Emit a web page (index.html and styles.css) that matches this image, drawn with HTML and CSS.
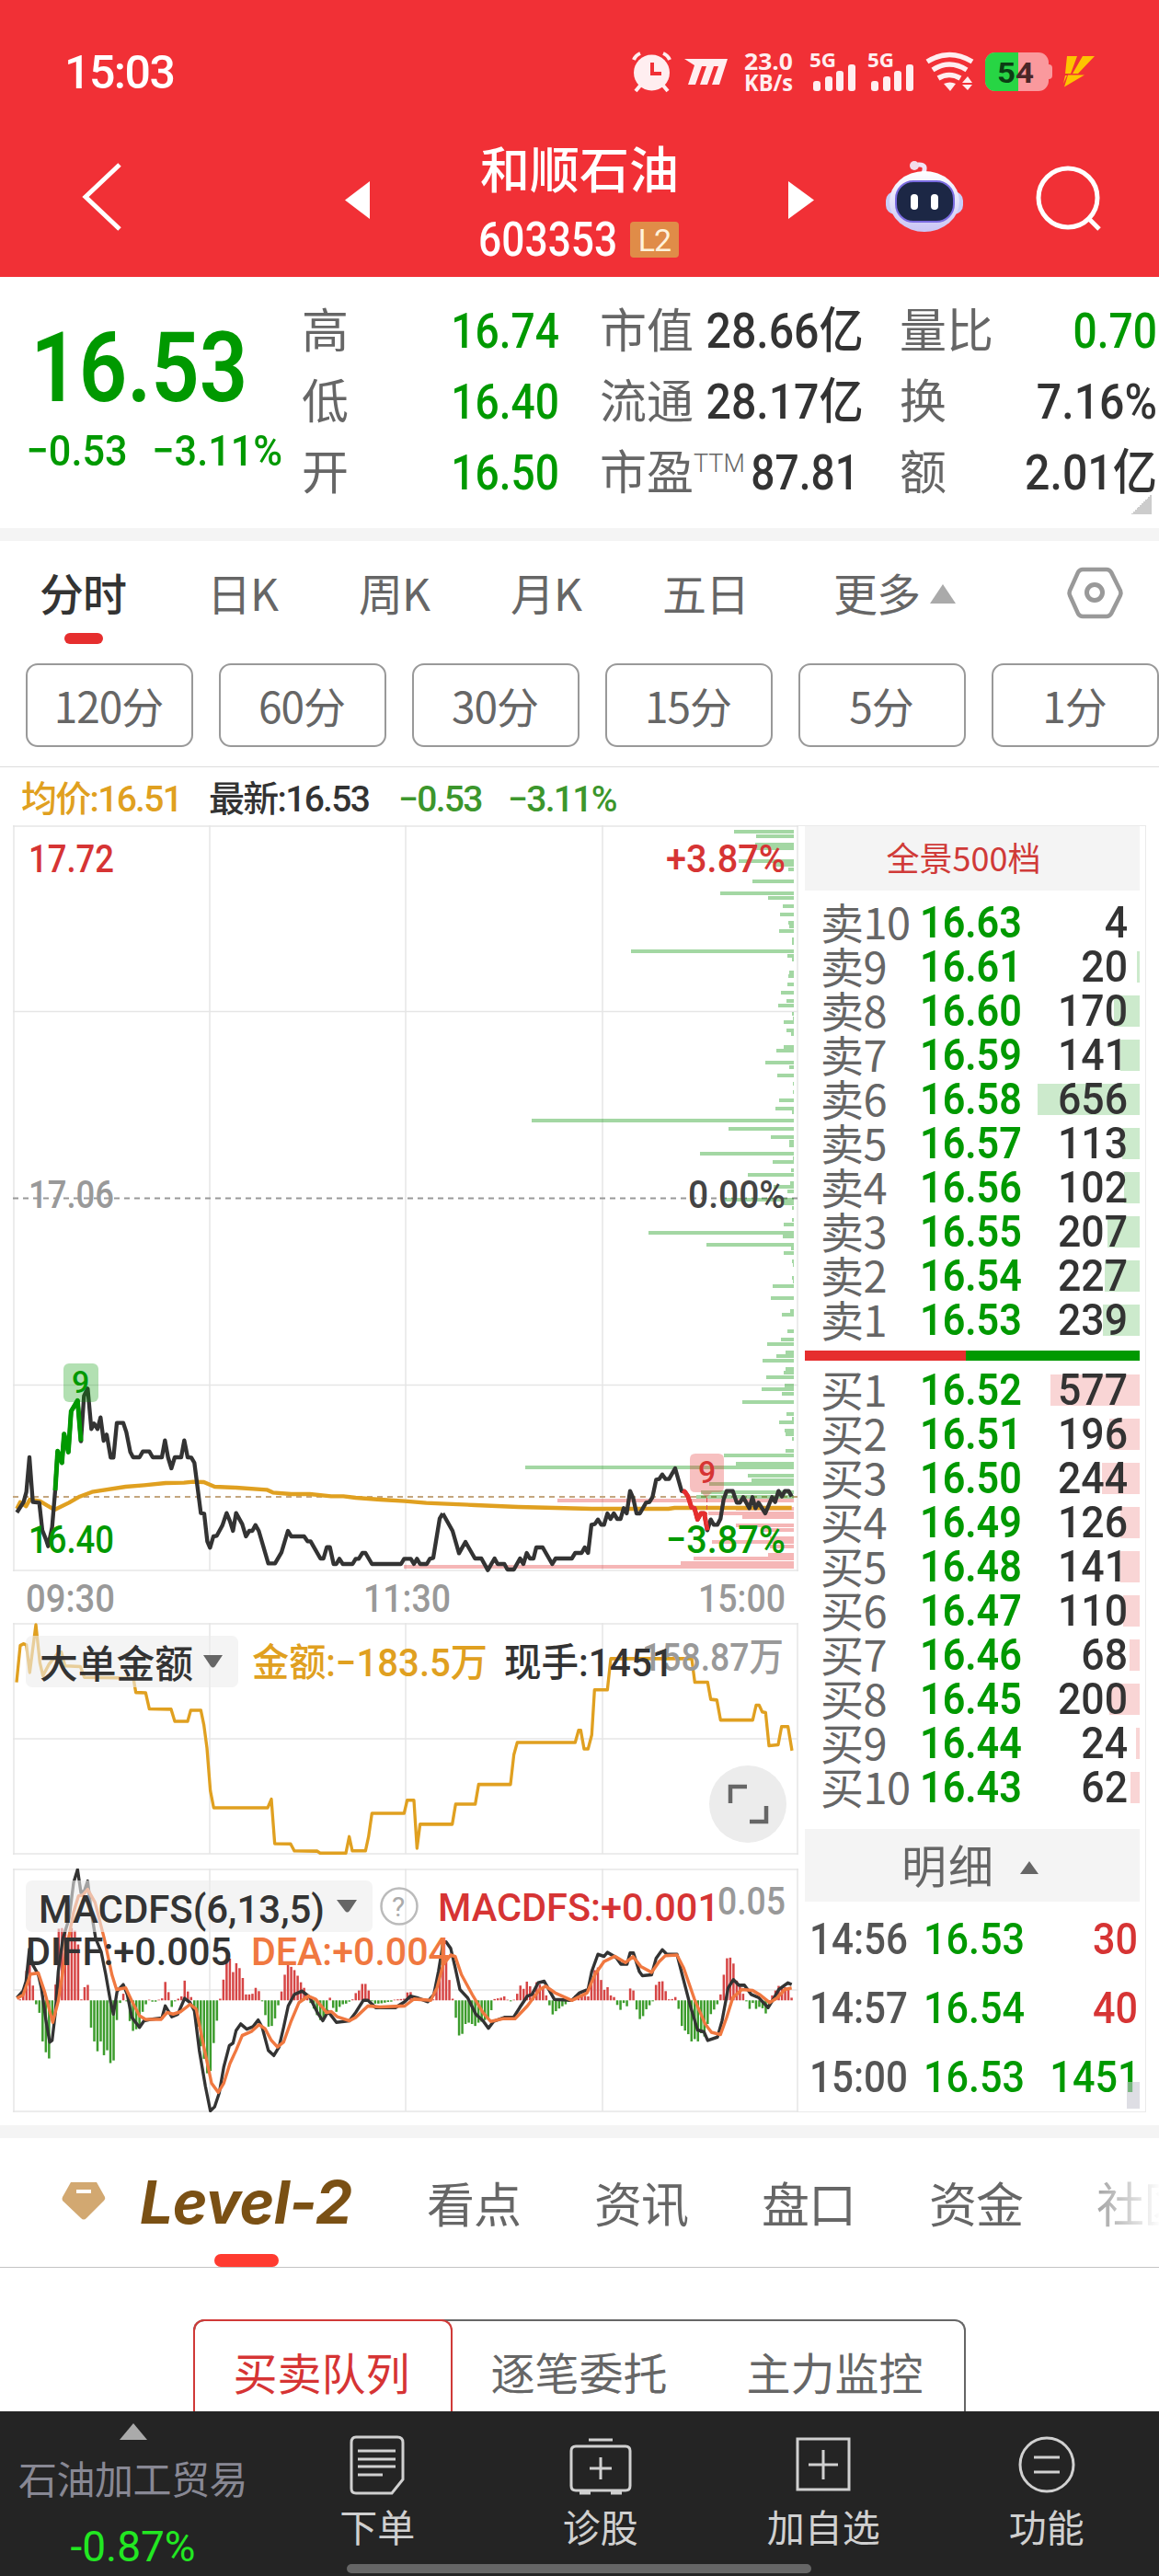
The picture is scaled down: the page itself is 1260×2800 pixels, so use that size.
FILE: index.html
```
<!DOCTYPE html>
<html lang="zh-CN">
<head>
<meta charset="UTF-8">
<title>和顺石油 603353</title>
<link rel="stylesheet" href="styles.css">
</head>
<body>
<header class="top">
  <div class="status">
    <span class="clock">15:03</span>
    <svg class="tray" viewBox="680 50 520 60" width="520" height="60">
      <!-- alarm -->
      <circle cx="708.500" cy="79" r="19.500" fill="#ffeef0"/>
      <path d="M689 65q2-5 7-7M728 65q-2-5-7-7M696 93l-5 6M721 93l5 6" stroke="#ffeef0" stroke-width="4" fill="none"/>
      <path d="M709 68v12h10" stroke="#f13036" stroke-width="4" fill="none"/>
      <path d="M744 64h47l-9 28h-8l7-20h-5l-7 20h-8l7-20h-5l-7 20h-8l7-21z" fill="#ffeef0"/>
      <g class="tiny">
        <text x="809" y="76" textLength="53" lengthAdjust="spacingAndGlyphs">23.0</text>
        <text x="809" y="99" textLength="53" lengthAdjust="spacingAndGlyphs">KB/s</text>
        <text x="880" y="73" textLength="29" lengthAdjust="spacingAndGlyphs" class="g5">5G</text>
        <text x="943" y="73" textLength="29" lengthAdjust="spacingAndGlyphs" class="g5">5G</text>
      </g>
      <g fill="#ffeef0">
        <rect x="884" y="88" width="8" height="11" rx="3"/><rect x="897" y="83" width="8" height="16" rx="3"/><rect x="909" y="77" width="8" height="22" rx="3"/><rect x="922" y="70" width="8" height="29" rx="3"/>
        <rect x="947" y="88" width="8" height="11" rx="3"/><rect x="960" y="83" width="8" height="16" rx="3"/><rect x="972" y="77" width="8" height="22" rx="3"/><rect x="985" y="70" width="8" height="29" rx="3"/>
        <path d="M1033 99l-7-8q7-3 13 0zM1052 83l5 7h-11zM1052 98l5-6h-11z"/>
      </g>
      <path d="M1008 67q24-15 49 0M1014 76q18-12 37 0M1020 85q12-7 24 0" fill="none" stroke="#ffeef0" stroke-width="5.500"/>
      <rect x="1071" y="57" width="69" height="42" rx="11" fill="#fa999d"/>
      <path d="M1082 57h25v42h-25a11 11 0 0 1-11-11v-20a11 11 0 0 1 11-11z" fill="#27d544"/>
      <path d="M1140 70q4 0 4 4v8q0 4-4 4z" fill="#fa999d"/>
      <text x="1084" y="90" class="pct" textLength="40" lengthAdjust="spacingAndGlyphs"><tspan fill="#0c3d14">5</tspan><tspan fill="#4a2628">4</tspan></text>
      <path d="M1160 61h11l-7 19h-6zM1177 61h13l-18 19h-6zM1161 81.500h18l-22 13zM1158 82h2l-4 9z" fill="#fdc400"/>
    </svg>
  </div>
  <div class="nav">
    <svg viewBox="0 130 360 171" width="360" height="171"><path d="M130 179L93 214l37 35" fill="none" stroke="#fff" stroke-width="5"/></svg>
    <svg viewBox="360 130 60 171" width="60" height="171"><path d="M402 197v41l-27-20.500z" fill="#fff"/></svg>
    <div class="stock">
      <div class="name">和顺石油</div>
      <div class="code"><span>603353</span><i>L2</i></div>
    </div>
    <svg viewBox="840 130 60 171" width="60" height="171"><path d="M857 197v41l28-20.500z" fill="#fff"/></svg>
    <svg viewBox="900 130 200 171" width="200" height="171">
      <defs>
        <linearGradient id="shell" x1="0" y1="0" x2="0" y2="1"><stop offset="0" stop-color="#fff"/><stop offset="1" stop-color="#c9c4f5"/></linearGradient>
      </defs>
      <path d="M1004 188q4-10-6-9" fill="none" stroke="#f0e4f6" stroke-width="5"/><circle cx="994" cy="180" r="5" fill="#f3dcea"/>
      <rect x="963" y="208" width="84" height="25" rx="10" fill="#c9cdf8"/>
      <ellipse cx="1005" cy="219" rx="38" ry="33" fill="url(#shell)"/>
      <rect x="974" y="197" width="63" height="44" rx="19" fill="#1c2745" stroke="#7a6be0" stroke-width="2"/>
      <rect x="990" y="211" width="8" height="17" rx="4" fill="#fff"/><rect x="1012" y="211" width="8" height="17" rx="4" fill="#fff"/>
    </svg>
    <svg viewBox="1100 130 160 171" width="160" height="171"><g fill="none" stroke="#fff" stroke-width="5"><circle cx="1161" cy="215" r="32"/><path d="M1183 237l12 12"/></g></svg>
  </div>
</header>

<section class="quote">
  <div class="last">
    <div class="price">16.53</div>
    <div class="chg"><span>−0.53</span><span>−3.11%</span></div>
  </div>
  <div class="facts">
    <span>高</span><b class="down">16.74</b><span>市值</span><b>28.66亿</b><span>量比</span><b class="down">0.70</b>
    <span>低</span><b class="down">16.40</b><span>流通</span><b>28.17亿</b><span>换</span><b>7.16%</b>
    <span>开</span><b class="down">16.50</b><span>市盈<sup>TTM</sup></span><b class="pe">87.81</b><span>额</span><b>2.01亿</b>
  </div>
  <i class="corner"></i>
</section>

<nav class="periods">
  <a class="on">分时</a><a>日K</a><a>周K</a><a>月K</a><a>五日</a><a class="more">更多</a>
  <svg viewBox="1158 613 64 64" width="64" height="64"><path d="M1177 619h26q3 0 5 3l10 20q1 3 0 5l-10 20q-2 3-5 3h-26q-3 0-5-3l-9-20q-1-2 0-5l9-20q2-3 5-3z" fill="none" stroke="#999" stroke-width="4.500"/><circle cx="1190" cy="644" r="8.500" fill="none" stroke="#999" stroke-width="5"/></svg>
</nav>
<div class="minutes"><a>120分</a><a>60分</a><a>30分</a><a>15分</a><a>5分</a><a>1分</a></div>

<div class="legend"><span class="avg">均价:16.51</span><span class="now">最新:16.53</span><span class="g">−0.53</span><span class="g">−3.11%</span></div>

<main class="board">
  <div class="charts">
    <svg viewBox="0 897 868 867" width="868" height="867" class="chart">
      <path d="M14 898H868M14 1707H868M15 897V1708M867 897V1708M228 897V1707M441 897V1707M655 897V1707M14 1099.500H868M14 1505.500H868" class="grid"/>
      <path d="M14 1302.500H868" stroke="#999" stroke-width="2" stroke-dasharray="6 5"/>
      <path d="M14 1627H868" stroke="#c4a67e" stroke-width="2" stroke-dasharray="6 5"/>
      <g id="depth"></g>
      <g transform="translate(0 1440) scale(.33333)" class="line">
        <path class="avgline" d="M55 600L66 578 85 592 97 570 130 575 155 590 178 603 225 580 260 560 300 545 410 528 470 523 540 516 600 515 630 512 665 513 700 528 770 531 870 538 890 547 950 552 1010 552 1080 559 1120 559 1160 564 1240 570 1320 575 1390 581 1440 583 1550 588 1690 594 1810 597 1930 600 2180 600 2200 597 2582 597"/>
        <path class="dark" d="M55 612L77 578 86 545 96 432 107 578 128 580 138 670 150 700 157 722 170 660 180 540 188 412 202 450 209 356 223 415 232 282 253 247 264 380 274 232 286 208 298 340 307 322 318 340 328 302 338 378 348 358 361 433 370 433 381 320 402 320 412 350 425 415 434 432 455 432 466 413 487 413 498 432 528 432 538 377 548 432 559 468 570 432 591 432 601 377 612 432 624 433 634 450 655 614 666 616 676 706 685 727 696 690 707 688 725 655 739 614 750 640 760 672 770 614 790 650 802 690 813 672 823 672 833 653 844 672 875 778 897 778 918 742 939 672 950 690 992 690 1003 706 1013 706 1045 762 1055 762 1066 725 1076 725 1088 780 1097 780 1107 763 1118 780 1150 780 1160 763 1170 763 1182 744 1192 744 1213 780 1308 780 1318 763 1340 763 1350 780 1360 763 1370 780 1392 780 1402 763 1413 760 1434 632 1444 615"/>
        <path class="up9" d="M180 540L188 412 202 450 209 356 223 415 232 282 253 247 264 380"/>
      </g>
      <g transform="translate(480 1340) scale(.33333)" class="line">
        <path class="dark" d="M4 915L36 972 57 1045 78 1008 109 1062 130 1062 151 1100 173 1062 183 1080 205 1080 215 1098 236 1098 256 1062 267 1080 278 1044 288 1062 300 1062 309 1026 330 1026 361 1080 372 1062 425 1062 436 1044 457 1044 467 1026 478 1044 489 952 500 950 510 935 521 952 530 952 541 915 551 933 562 915 573 933 584 933 594 898 604 915 615 842 625 865 636 915 647 915 667 880 678 878 688 862 700 805 710 803 720 788 731 803 742 803 762 768 783 842 794 845 804 860 815 895 825 898 835 935 846 915 857 915 867 970 878 935 888 952 900 952 910 932 920 870 930 842 950 842 963 880 973 880 984 862 994 880 1004 898 1014 862 1024 898 1034 880 1056 915 1078 862 1088 878 1099 842 1110 860 1120 842 1132 842 1142 860"/>
        <path class="dn9" d="M787 840L794 845 804 860 815 895 825 898 835 935 846 915 857 915 867 970"/>
      </g>
      <rect x="69" y="1482" width="38" height="42" rx="6" fill="#009900" fill-opacity=".3"/>
      <path d="M756 1580h25q6 0 6 6v30q0 6-6 6h-7l-6 6-6-6h-6q-6 0-6-6v-30q0-6 6-6z" fill="#e62e2e" fill-opacity=".3"/>
      <path d="M768.500 1628v30" stroke="#e05050" stroke-dasharray="5 3"/>
      <g class="n9"><text x="78" y="1514" fill="#090">9</text><text x="759" y="1612" fill="#d63434">9</text></g>
      <g class="t42">
        <text x="31" y="948" textLength="93" lengthAdjust="spacingAndGlyphs" fill="#d63434">17.72</text>
        <text x="724" y="948" textLength="130" lengthAdjust="spacingAndGlyphs" fill="#d63434">+3.87%</text>
        <text x="31" y="1313" textLength="93" lengthAdjust="spacingAndGlyphs" fill="#999">17.06</text>
        <text x="748" y="1313" textLength="106" lengthAdjust="spacingAndGlyphs" fill="#444">0.00%</text>
        <text x="31" y="1688" textLength="93" lengthAdjust="spacingAndGlyphs" fill="#090">16.40</text>
        <text x="724" y="1688" textLength="130" lengthAdjust="spacingAndGlyphs" fill="#090">−3.87%</text>
        <g fill="#999">
          <text x="28" y="1752" textLength="97" lengthAdjust="spacingAndGlyphs">09:30</text>
          <text x="395" y="1752" textLength="95" lengthAdjust="spacingAndGlyphs">11:30</text>
          <text x="759" y="1752" textLength="95" lengthAdjust="spacingAndGlyphs">15:00</text>
        </g>
      </g>
    </svg>

    <svg viewBox="0 1764 868 267" width="868" height="267" class="chart">
      <path d="M14 1765H868M14 2015H868M15 1764V2016M867 1764V2016M228 1764V2015M441 1764V2015M655 1764V2015M14 1890H868" class="grid"/>
      <g transform="translate(0 1750) scale(.33333 .35714)" class="line thin">
        <path class="avgline" d="M54 220L66 108 76 103 86 106 97 190 117 45 130 160 140 200 160 165 190 130 200 128 212 170 262 172 275 205 435 207 443 251 475 252 487 301 558 302 570 339 612 339 622 305 655 305 665 350 675 420 686 550 697 602 873 602 885 576 896 711 948 712 960 733 1035 734 1044 740 1128 740 1139 690 1149 733 1192 733 1202 690 1213 619 1318 619 1328 579 1350 579 1360 725 1370 652 1475 652 1486 591 1550 591 1561 531 1665 531 1676 440 1687 403 1876 403 1887 366 1894 366 1905 423 1918 423 1930 380 1939 243 1981 243 1992 148 2256 148 2266 220 2308 220 2318 272 2338 274 2350 335 2455 335 2466 290 2476 290 2486 310 2497 312 2508 413 2538 410 2549 355 2570 355 2583 428"/>
      </g>
      <rect x="28" y="1778" width="231" height="56" rx="7" class="pill"/>
      <path d="M221 1799h21l-8 12q-2.500 3-5 0z" fill="#666"/>
      <g class="t42">
        <text x="698" y="1816" textLength="154" lengthAdjust="spacingAndGlyphs" fill="#999">158.87万</text>
        <text x="43" y="1824" textLength="167" lengthAdjust="spacingAndGlyphs">大单金额</text>
        <text x="274" y="1822" textLength="256" lengthAdjust="spacingAndGlyphs" fill="#e0a020">金额:−183.5万</text>
        <text x="548" y="1822" textLength="184" lengthAdjust="spacingAndGlyphs">现手:1451</text>
      </g>
      <circle cx="813" cy="1961" r="42" fill="#ececec"/>
      <path d="M794 1960v-18h18M833 1963v17h-18" fill="none" stroke="#666" stroke-width="4.500"/>
    </svg>

    <svg viewBox="0 2031 868 265" width="868" height="265" class="chart">
      <path d="M14 2032H868M14 2295H868M15 2031V2296M867 2031V2296M228 2031V2295M441 2031V2295M655 2031V2295M14 2163H868" class="grid"/>
      <g transform="translate(0 1750) scale(.33333 .35714)">
        <g id="macd"></g>
        <g class="line thin">
          <path class="dark" d="M55 1180L75 1160 85 1130 96 1032 107 1080 125 1110 135 1150 150 1250 162 1315 170 1310 180 1230 190 1100 205 1000 225 940 240 830 253 790 264 860 275 855 286 825 298 920 312 1000 330 1040 345 1110 360 1190 370 1230 382 1160 402 1140 415 1170 430 1240 455 1270 470 1250 490 1246 528 1242 539 1205 560 1238 580 1230 602 1182 620 1195 634 1220 650 1340 670 1450 686 1524 700 1512 715 1470 730 1390 748 1326 760 1318 770 1280 785 1260 805 1276 825 1268 842 1248 855 1270 875 1340 893 1356 910 1330 925 1270 940 1205 960 1170 985 1160 1010 1178 1035 1225 1053 1250 1070 1222 1097 1255 1140 1250 1160 1225 1185 1188 1200 1188 1225 1210 1290 1210 1320 1192 1339 1175 1360 1180 1395 1192 1415 1170 1430 1100 1445 1015 1455 1010 1470 1030 1485 1090 1500 1155 1525 1180 1552 1230 1575 1250 1593 1273 1610 1252 1645 1240 1675 1240 1695 1210 1720 1175 1735 1170 1755 1135 1775 1130 1790 1155 1808 1185 1865 1188 1890 1165 1918 1155 1930 1100 1950 1048 1970 1054 1981 1042 2010 1058 2025 1078 2045 1078 2055 1044 2066 1044 2085 1100 2095 1113 2125 1110 2140 1060 2160 1034 2175 1048 2208 1048 2225 1110 2250 1200 2275 1278 2296 1284 2308 1310 2340 1300 2355 1250 2375 1150 2392 1125 2410 1142 2428 1142 2450 1170 2475 1180 2505 1210 2525 1180 2540 1155 2570 1135 2582 1140"/>
          <path class="dea" d="M55 1182L75 1172 100 1108 125 1105 145 1160 172 1255 190 1190 215 1040 240 920 256 870 270 868 286 850 310 890 340 1000 365 1110 380 1155 410 1150 430 1190 455 1235 475 1246 525 1246 545 1225 565 1230 590 1222 620 1200 640 1215 665 1330 690 1440 712 1468 730 1440 750 1380 770 1340 790 1295 820 1283 845 1262 865 1275 885 1310 905 1330 925 1315 950 1250 975 1195 1005 1175 1030 1185 1065 1225 1080 1222 1100 1238 1140 1250 1160 1240 1200 1205 1240 1208 1320 1205 1350 1184 1405 1188 1425 1150 1445 1080 1470 1050 1485 1055 1505 1110 1540 1170 1575 1225 1600 1252 1640 1244 1680 1244 1720 1205 1760 1155 1780 1145 1810 1165 1865 1188 1915 1165 1940 1110 1970 1070 2005 1054 2040 1073 2065 1055 2090 1085 2125 1103 2150 1070 2170 1052 2208 1050 2230 1090 2265 1185 2300 1260 2320 1285 2350 1292 2370 1240 2390 1180 2420 1155 2455 1158 2480 1172 2510 1195 2535 1180 2560 1155 2582 1150"/>
        </g>
      </g>
      <rect x="28" y="2044" width="377" height="56" rx="7" class="pill"/>
      <path d="M366 2065h22l-8 12q-2.500 3-5 0z" fill="#666"/>
      <g class="t42">
        <text x="42" y="2090" textLength="311" lengthAdjust="spacingAndGlyphs">MACDFS(6,13,5)</text>
        <text x="780" y="2081" textLength="74" lengthAdjust="spacingAndGlyphs" fill="#999">0.05</text>
        <text x="476" y="2088" textLength="306" lengthAdjust="spacingAndGlyphs" fill="#d63434">MACDFS:+0.001</text>
        <text x="28" y="2136" textLength="224" lengthAdjust="spacingAndGlyphs">DIFF:+0.005</text>
        <text x="273" y="2136" textLength="216" lengthAdjust="spacingAndGlyphs" fill="#f07840">DEA:+0.004</text>
      </g>
      <circle cx="434" cy="2072" r="19.500" fill="none" stroke="#bbb" stroke-width="2.500"/>
      <text x="426" y="2083" class="ask">?</text>
    </svg>
  </div>

  <aside class="book">
    <div class="all">全景500档</div>
    <div id="asks" class="rows"></div>
    <div class="ratio"><i></i></div>
    <div id="bids" class="rows"></div>
    <div class="detail">明细<i></i></div>
    <div class="ticks">
      <div><span>14:56</span><b>16.53</b><em class="r">30</em></div>
      <div><span>14:57</span><b>16.54</b><em class="r">40</em></div>
      <div><span>15:00</span><b>16.53</b><em>1451</em></div>
    </div>
    <i class="grip"></i>
  </aside>
</main>

<nav class="sections">
  <svg viewBox="60 2364 60 60" width="60" height="60"><path d="M77 2374h28l9 16q1 2-1 4l-19 19q-3 3-6 0l-20-19q-1-2 0-4z" fill="#d2a871"/><path d="M83 2384h16" stroke="#fff" stroke-width="4"/></svg>
  <a class="lv2">Level-2</a><a>看点</a><a>资讯</a><a>盘口</a><a>资金</a><a class="fade">社区</a>
</nav>
<div class="seg"><a class="on">买卖队列</a><a>逐笔委托</a><a>主力监控</a></div>

<footer class="bar">
  <div class="industry"><i></i><span>石油加工贸易</span><b>-0.87%</b></div>
  <a><svg viewBox="0 0 70 70" width="70" height="70"><path d="M12 4h45q6 0 6 6v40L51 65H12q-5 0-5-5V10q0-6 5-6zM14 19h41M14 28h41M14 36h41M14 45h27"/></svg>下单</a>
  <a><svg viewBox="0 0 70 70" width="70" height="70"><path d="M8 14h54q5 0 5 5v38q0 5-5 5H8q-5 0-5-5V19q0-5 5-5zM22 7h26M12 65h12M46 65h12M35 26v24M23 38h24"/></svg>诊股</a>
  <a><svg viewBox="0 0 70 70" width="70" height="70"><path d="M7 6h56v55H7zM35 18v32M19 34h32"/></svg>加自选</a>
  <a><svg viewBox="0 0 70 70" width="70" height="70"><circle cx="35" cy="34" r="29"/><path d="M21 26h28M21 42h28"/></svg>功能</a>
  <i class="home"></i>
</footer>
<script src="app.js"></script>
</body>
</html>
```
FILE: styles.css
```
* {
  margin: 0;
  padding: 0;
  box-sizing: border-box;
}

body {
  width: 1260px;
  height: 2800px;
  overflow: hidden;
  background: #fff;
  color: #333;
  font-family: Roboto, "Noto Sans CJK SC", sans-serif;
  position: relative;
}

i, em {
  font-style: normal;
}

svg {
  display: block;
  flex: none;
}

/* red header */
.top {
  height: 301px;
  background: #f13036;
  color: #fff;
}

.status {
  height: 130px;
  padding: 50px 60px 0 70px;
  display: flex;
  justify-content: space-between;
}

.clock {
  font-size: 50px;
  font-weight: 500;
  line-height: 58px;
  letter-spacing: -1.500px;
}

.tiny {
  font: 700 25px "Open Sans", sans-serif;
  fill: #ffeef0;
}

.g5 {
  font-size: 21px;
}

.pct {
  font: 700 32px Roboto, sans-serif;
}

.nav {
  display: flex;
}

.stock {
  width: 420px;
  padding-top: 22px;
  text-align: center;
}

.name {
  font: 500 54px/60px "Noto Sans CJK SC", sans-serif;
}

.code {
  display: flex;
  align-items: center;
  height: 60px;
  margin-top: 18px;
  padding-left: 100px;
  font-size: 51px;
  font-weight: 500;
}

.code span {
  width: 165px;
  text-align: left;
  transform: scaleX(.87);
  transform-origin: left;
}

.code i {
  width: 53px;
  height: 39px;
  border-radius: 4px;
  background: #e08c48;
  color: #fff3dc;
  font-size: 34px;
  font-weight: 400;
  line-height: 40px;
  letter-spacing: -1px;
}

/* quote */
.quote {
  height: 287px;
  display: flex;
  position: relative;
  border-bottom: 14px solid #f4f4f4;
}

.last {
  width: 329px;
  padding-top: 40px;
  color: #090;
}

.price {
  height: 120px;
  padding-left: 38px;
  font-size: 105px;
  font-weight: 600;
  line-height: 120px;
  transform: scaleX(.875);
  transform-origin: left;
}

.chg {
  display: flex;
  gap: 29px;
  padding-left: 31px;
  font-size: 47px;
  line-height: 58px;
  font-weight: 500;
  transform: scaleX(.92);
  transform-origin: left;
}

/* narrow digits */
.facts b,
.row b,
.row em,
.ticks span,
.ticks b,
.ticks em {
  transform: scaleX(.88);
  transform-origin: left;
}

.facts {
  width: 931px;
  padding-top: 21px;
  display: grid;
  grid-template-columns: 98px 181px 143px 183px 90px 234px;
  grid-template-rows: repeat(3, 77px);
  justify-content: start;
  line-height: 77px;
  white-space: nowrap;
}

.facts span {
  font-size: 51px;
  color: #666;
  margin-left: -1px;
}

.facts span:nth-child(6n+3) {
  margin-left: 44px;
}

.facts span:nth-child(6n+5) {
  margin-left: 44px;
}

.facts b {
  font-size: 53px;
  font-weight: 500;
  text-align: right;
  transform: scaleX(.91);
  transform-origin: right;
}

.facts sup {
  font-size: 27px;
  line-height: 0;
  vertical-align: 19px;
  font-weight: 300;
}

.facts .down,
.facts .pe {
  transform: scaleX(.87);
}

.facts .down {
  color: #090;
}

.corner {
  position: absolute;
  right: 8px;
  bottom: 15px;
  width: 22px;
  height: 22px;
  background: linear-gradient(135deg, transparent 50%, #ccc 50%);
}

/* period tabs */
.periods {
  height: 133px;
  padding: 22px 38px 0 43px;
  display: flex;
  align-items: flex-start;
  font: 48px/66px "Noto Sans CJK SC", sans-serif;
  letter-spacing: -1px;
  color: #666;
}

.periods a {
  margin-right: 88px;
}

.periods .on {
  color: #333;
  font-weight: 500;
}

.periods .on::after {
  content: "";
  display: block;
  width: 42px;
  height: 12px;
  margin: 12px 0 0 27px;
  border-radius: 6px;
  background: #e62e2e;
}

.periods .more::after {
  content: "";
  display: inline-block;
  margin-left: 11px;
  vertical-align: 8px;
  border: 14px solid transparent;
  border-top: 0;
  border-bottom: 21px solid #aaa;
}

.periods svg {
  margin: 3px 0 0 auto;
}

.periods .more {
  margin: 0 0 0 4px;
}

.minutes {
  height: 113px;
  padding-left: 28px;
  display: flex;
  gap: 28px;
  border-bottom: 1px solid #ddd;
}

.minutes a {
  flex: 0 0 182px;
  height: 91px;
  border: 2px solid #999;
  border-radius: 13px;
  color: #666;
  font: 46px/86px "Noto Sans CJK SC", sans-serif;
  letter-spacing: -1px;
  text-indent: -2px;
  text-align: center;
}

.legend {
  height: 63px;
  padding-left: 23px;
  display: flex;
  font-size: 39px;
  font-weight: 500;
  line-height: 70px;
  letter-spacing: -1.700px;
  white-space: nowrap;
}

.legend .avg {
  width: 204px;
  color: #e0a020;
}

.legend .now {
  width: 206px;
}

.legend .g {
  width: 119px;
  color: #3c962c;
}

/* charts */
.board {
  display: flex;
  height: 1413px;
}

.charts {
  width: 868px;
}

.grid {
  fill: none;
  stroke: #e6e6e6;
  stroke-width: 1.500;
}

.line path {
  fill: none;
  stroke-width: 13;
  stroke-linejoin: round;
}

.line.thin path {
  stroke-width: 10;
}

.line .avgline {
  stroke: #e0a020;
}

.line .dark {
  stroke: #333;
}

.line .up9 {
  stroke: #090;
  stroke-width: 15;
}

.line .dn9 {
  stroke: #e62e2e;
  stroke-width: 15;
}

.line .dea {
  stroke: #f07840;
}

.t42 {
  font: 500 42px Roboto, "Noto Sans CJK SC", sans-serif;
  fill: #333;
}

.n9 {
  font: 500 34px Roboto, sans-serif;
}

.ask {
  font: 30px Roboto, sans-serif;
  fill: #aaa;
}

.pill {
  fill: #ececec;
  fill-opacity: .6;
}

/* order book */
.book {
  width: 378px;
  height: 1399px;
  padding: 0 6px 0 7px;
  border: 1px solid #eaeaea;
  border-left: 0;
  position: relative;
}

.all {
  height: 70px;
  background: #f4f4f4;
  color: #d03a38;
  font: 36px/66px "Noto Sans CJK SC", sans-serif;
  text-align: center;
  padding-right: 19px;
}

.rows {
  padding-top: 11px;
}

.row {
  height: 48px;
  display: grid;
  grid-template-columns: 107px 124px 1fr;
  padding: 0 13px 0 18px;
  line-height: 48px;
  font-size: 49px;
  font-weight: 500;
  background: linear-gradient(#cceacc, #cceacc) right 7px / var(--w) 34px no-repeat;
}

#bids .row {
  background-image: linear-gradient(#f9d5d5, #f9d5d5);
}

.row span {
  font: 400 47px/44px "Noto Sans CJK SC", sans-serif;
  letter-spacing: -.500px;
  text-indent: -1px;
  color: #666;
}

.row b {
  font-weight: 600;
  color: #090;
}

.row em {
  text-align: right;
  transform: scaleX(.91);
  transform-origin: right;
}

.ratio {
  height: 11px;
  margin-top: 9px;
  background: #090;
}

.ratio i {
  display: block;
  width: 175px;
  height: 11px;
  background: #e62e2e;
}

#bids {
  padding-top: 8px;
}

.detail {
  height: 79px;
  margin-top: 21px;
  padding-left: 105px;
  background: #f4f4f4;
  color: #666;
  font: 49px/76px "Noto Sans CJK SC", sans-serif;
  letter-spacing: 2px;
}

.detail i {
  display: inline-block;
  margin-left: 27px;
  vertical-align: 10px;
  border: 10px solid transparent;
  border-top: 0;
  border-bottom: 14px solid #666;
}

.ticks {
  padding: 3px 2px 0 5px;
}

.ticks div {
  height: 75px;
  display: grid;
  grid-template-columns: 124px 124px 1fr;
  line-height: 75px;
  font-size: 49px;
  font-weight: 500;
  color: #090;
}

.ticks span {
  color: #555;
  transform: scaleX(.86);
}

.ticks b {
  font-weight: 500;
}

.ticks em {
  text-align: right;
  transform-origin: right;
}

.ticks .r {
  color: #d63434;
}

.grip {
  position: absolute;
  right: 6px;
  bottom: 3px;
  width: 14px;
  height: 29px;
  background: rgba(200, 200, 210, .6);
}

/* lower tabs */
.sections {
  height: 155px;
  border-top: 14px solid #f4f4f4;
  border-bottom: 1px solid #c4c4c4;
  padding: 38px 0 0 60px;
  display: flex;
  overflow: hidden;
  color: #666;
  font: 52px/64px "Noto Sans CJK SC", sans-serif;
  letter-spacing: -1px;
  white-space: nowrap;
}

.sections a {
  flex: 0 0 182px;
}

.sections .lv2 {
  flex: 0 0 344px;
  padding-left: 32px;
  font: italic 700 64px/64px Inter, sans-serif;
  letter-spacing: -.500px;
  color: #7a5014;
}

.lv2::after {
  content: "";
  display: block;
  width: 70px;
  height: 14px;
  margin: 24px 0 0 81px;
  border-radius: 7px;
  background: #ff3b30;
}

.sections .fade {
  -webkit-mask: linear-gradient(90deg, rgba(0, 0, 0, .6), transparent 70px);
  mask: linear-gradient(90deg, rgba(0, 0, 0, .6), transparent 70px);
}

.seg {
  width: 840px;
  height: 100px;
  margin: 56px auto 0;
  display: flex;
  border: 2px solid #666;
  border-bottom: 0;
  border-radius: 12px 12px 0 0;
  font: 48px/108px "Noto Sans CJK SC", sans-serif;
  color: #666;
  text-align: center;
  text-indent: -3px;
}

.seg a {
  flex: 1;
}

.seg .on {
  margin: -2px 0 0 -2px;
  border: 2px solid #d03a38;
  border-bottom: 0;
  border-radius: 12px 12px 0 0;
  color: #d63434;
}

/* bottom bar */
.bar {
  position: absolute;
  left: 0;
  top: 2621px;
  width: 1260px;
  height: 179px;
  background: #242424;
  display: flex;
  font-family: "Noto Sans CJK SC", sans-serif;
}

.industry {
  width: 289px;
  display: flex;
  flex-direction: column;
  align-items: center;
}

.industry i {
  margin-top: 13px;
  border: 15px solid transparent;
  border-top: 0;
  border-bottom: 18px solid #aaa;
}

.industry span {
  margin-top: 13px;
  font-size: 42px;
  line-height: 56px;
  letter-spacing: -.500px;
  color: #888894;
}

.industry b {
  margin-top: 19px;
  font: 46px/56px Roboto, sans-serif;
  letter-spacing: 0;
  color: #22e822;
}

.bar a {
  width: 242.500px;
  padding-top: 24px;
  display: flex;
  flex-direction: column;
  align-items: center;
  color: #d0d0d0;
  font-size: 41px;
  line-height: 60px;
}

.bar a svg {
  fill: none;
  stroke: #d0d0d0;
  stroke-width: 3;
}

.home {
  position: absolute;
  left: 377px;
  bottom: 3px;
  width: 505px;
  height: 10px;
  border-radius: 5px;
  background: #666;
}
```
FILE: app.js
```
var asks = [[10, '16.63', 4, 0], [9, '16.61', 20, 3], [8, '16.60', 170, 28], [7, '16.59', 141, 21], [6, '16.58', 656, 111],
  [5, '16.57', 113, 19], [4, '16.56', 102, 17], [3, '16.55', 207, 35], [2, '16.54', 227, 38], [1, '16.53', 239, 40]];
var bids = [[1, '16.52', 577, 97], [2, '16.51', 196, 33], [3, '16.50', 244, 41], [4, '16.49', 126, 21], [5, '16.48', 141, 21],
  [6, '16.47', 110, 18], [7, '16.46', 68, 11], [8, '16.45', 200, 33], [9, '16.44', 24, 4], [10, '16.43', 62, 10]];

function rows(id, side, list) {
  document.getElementById(id).innerHTML = list.map(function (r) {
    return '<div class="row" style="--w:' + r[3] + 'px"><span>' + side + r[0] + '</span><b>' + r[1] + '</b><em>' + r[2] + '</em></div>';
  }).join('');
}
rows('asks', '卖', asks);
rows('bids', '买', bids);

// depth profile: [y, left edge], bars end at x = 863
var sell = [[904,798],[909,822],[918,821],[922,821],[936,803],[940,843],[945,857],[958,818],[971,783],[976,835],[985,851],[994,848],
  [1003,857],[1007,858],[1012,847],[1021,861],[1025,861],[1034,686],[1039,856],[1043,861],[1057,858],[1061,857],[1070,856],[1079,849],
  [1088,855],[1093,846],[1102,861],[1107,862],[1111,852],[1120,855],[1124,860],[1138,852],[1142,844],[1155,832],[1160,858],[1169,845],
  [1178,862],[1187,862],[1196,847],[1205,843],[1209,861],[1218,578],[1227,792],[1236,838],[1241,858],[1245,858],[1254,761],[1259,862],
  [1263,840],[1272,860],[1277,813],[1286,859],[1290,841],[1295,856],[1304,788],[1308,849],[1313,861],[1326,861],[1331,852],[1340,705],
  [1344,851],[1353,768],[1357,860],[1362,852],[1371,861],[1375,862],[1389,861],[1393,862],[1398,840],[1411,838],[1425,859],[1429,850],
  [1447,856],[1456,849],[1461,834],[1470,854],[1474,844],[1479,829],[1488,854],[1492,852],[1497,833],[1506,853],[1510,828],[1515,850],
  [1524,807],[1537,855],[1542,861],[1546,847],[1555,853],[1559,854],[1564,861],[1577,854],[1582,787],[1591,800],[1595,571],[1604,813],
  [1609,817],[1613,771],[1622,762],[1627,757]];
var buy = [[1631,606],[1640,800],[1645,770],[1649,807],[1658,800],[1663,827],[1672,837],[1676,774],[1681,837],[1690,835],[1694,754],[1699,740],[1703,439]];

function bars(list, color) {
  return list.map(function (d) {
    return '<rect x="' + d[1] + '" y="' + (d[0] - 2) + '" width="' + (863 - d[1]) + '" height="4" fill="' + color + '"/>';
  }).join('');
}
document.getElementById('depth').innerHTML = bars(sell, 'rgba(0,145,0,.36)') + bars(buy, 'rgba(225,40,40,.34)');

var macd = [0,3,30,90,155,45,-12,-38,-125,-158,-177,-60,48,218,220,210,190,220,212,170,3,40,47,-83,-125,-155,-125,-167,-152,-191,
  -183,-60,-8,20,-3,-63,-93,-88,-86,-35,-12,2,-4,-4,2,6,56,25,-20,-3,5,12,60,27,10,-30,-80,-140,-178,-222,
  -215,-130,-62,5,63,120,127,86,113,98,68,18,18,20,38,28,-3,-45,-80,-78,-55,-15,27,78,112,102,92,75,55,38,
  15,-8,-25,-45,-60,-58,-37,8,-23,-35,-20,-12,-10,-4,3,22,30,50,50,30,-3,-10,-10,-9,-7,-5,-4,2,3,4,
  5,24,25,10,4,4,3,-3,-3,3,35,100,150,130,62,5,-53,-107,-102,-72,-68,-72,-78,-68,-65,-60,-55,-30,4,6,
  8,12,2,-3,2,20,45,35,57,43,28,55,48,42,15,-15,-43,-33,-25,-18,-12,-4,4,15,18,16,14,12,50,92,
  100,62,32,40,15,10,-14,-29,-8,-18,36,30,-28,-57,-48,-27,-15,-3,47,57,58,28,3,4,10,-26,-78,-92,-103,-125,
  -118,-125,-100,-110,-72,-42,-28,-12,18,78,128,130,112,60,42,20,-3,-26,-8,-26,-20,-24,-40,-20,15,30,44,38,40,33,8];
var step = (2582 - 55) / (macd.length - 1);
document.getElementById('macd').innerHTML = macd.map(function (v, i) {
  return '<rect x="' + (51 + i * step) + '" y="' + (v > 0 ? 1188 - v : 1188) + '" width="7.5" height="' + Math.abs(v) + '" fill="' + (v > 0 ? '#d64545' : '#3c9c2c') + '"/>';
}).join('');
```
